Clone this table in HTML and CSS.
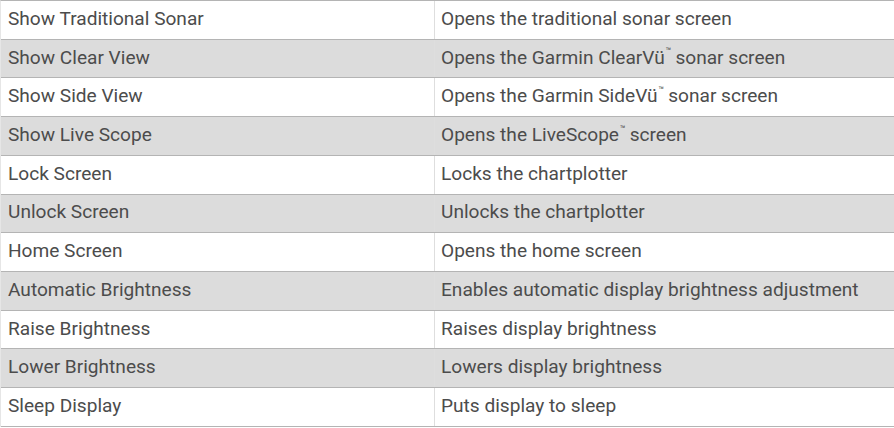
FILE: index.html
```html
<!DOCTYPE html>
<html>
<head>
<meta charset="utf-8">
<link rel="stylesheet" href="styles.css">
</head>
<body>
<div class="table">
  <div class="row"><div class="c1">Show Traditional Sonar</div><div class="c2">Opens the traditional sonar screen</div></div>
  <div class="row alt"><div class="c1">Show Clear View</div><div class="c2">Opens the Garmin ClearVü<sup>™</sup> sonar screen</div></div>
  <div class="row"><div class="c1">Show Side View</div><div class="c2">Opens the Garmin SideVü<sup>™</sup> sonar screen</div></div>
  <div class="row alt"><div class="c1">Show Live Scope</div><div class="c2">Opens the LiveScope<sup>™</sup> screen</div></div>
  <div class="row"><div class="c1">Lock Screen</div><div class="c2">Locks the chartplotter</div></div>
  <div class="row alt"><div class="c1">Unlock Screen</div><div class="c2">Unlocks the chartplotter</div></div>
  <div class="row"><div class="c1">Home Screen</div><div class="c2">Opens the home screen</div></div>
  <div class="row alt"><div class="c1">Automatic Brightness</div><div class="c2">Enables automatic display brightness adjustment</div></div>
  <div class="row"><div class="c1">Raise Brightness</div><div class="c2">Raises display brightness</div></div>
  <div class="row alt"><div class="c1">Lower Brightness</div><div class="c2">Lowers display brightness</div></div>
  <div class="row"><div class="c1">Sleep Display</div><div class="c2">Puts display to sleep</div></div>
</div>
</body>
</html>
```
FILE: styles.css
```css
html, body {
  margin: 0;
  padding: 0;
  background: #fff;
}
.table {
  width: 894px;
  border-top: 1px solid #b4b4b4;
  border-left: 1px solid #e6e6e6;
  box-sizing: border-box;
  font-family: Roboto, "Noto Sans", sans-serif;
  font-size: 19.1px;
  color: #4c4c4c;
}
.row {
  display: grid;
  grid-template-columns: 434px 1fr;
  height: 38.73px;
  box-sizing: border-box;
  border-bottom: 1px solid #b4b4b4;
  background: #fff;
}
.row.alt {
  background: #dcdcdc;
}
.c1, .c2 {
  display: flex;
  align-items: center;
  white-space: nowrap;
  padding-bottom: 3px;
  box-sizing: border-box;
}
.c1 {
  padding-left: 7px;
  border-right: 1px solid #dedede;
}
.c2 {
  padding-left: 6px;
}
sup {
  font-size: 9px;
  vertical-align: 0;
  position: relative;
  top: -6px;
  margin-left: 1px;
  margin-right: 4px;
}
```
